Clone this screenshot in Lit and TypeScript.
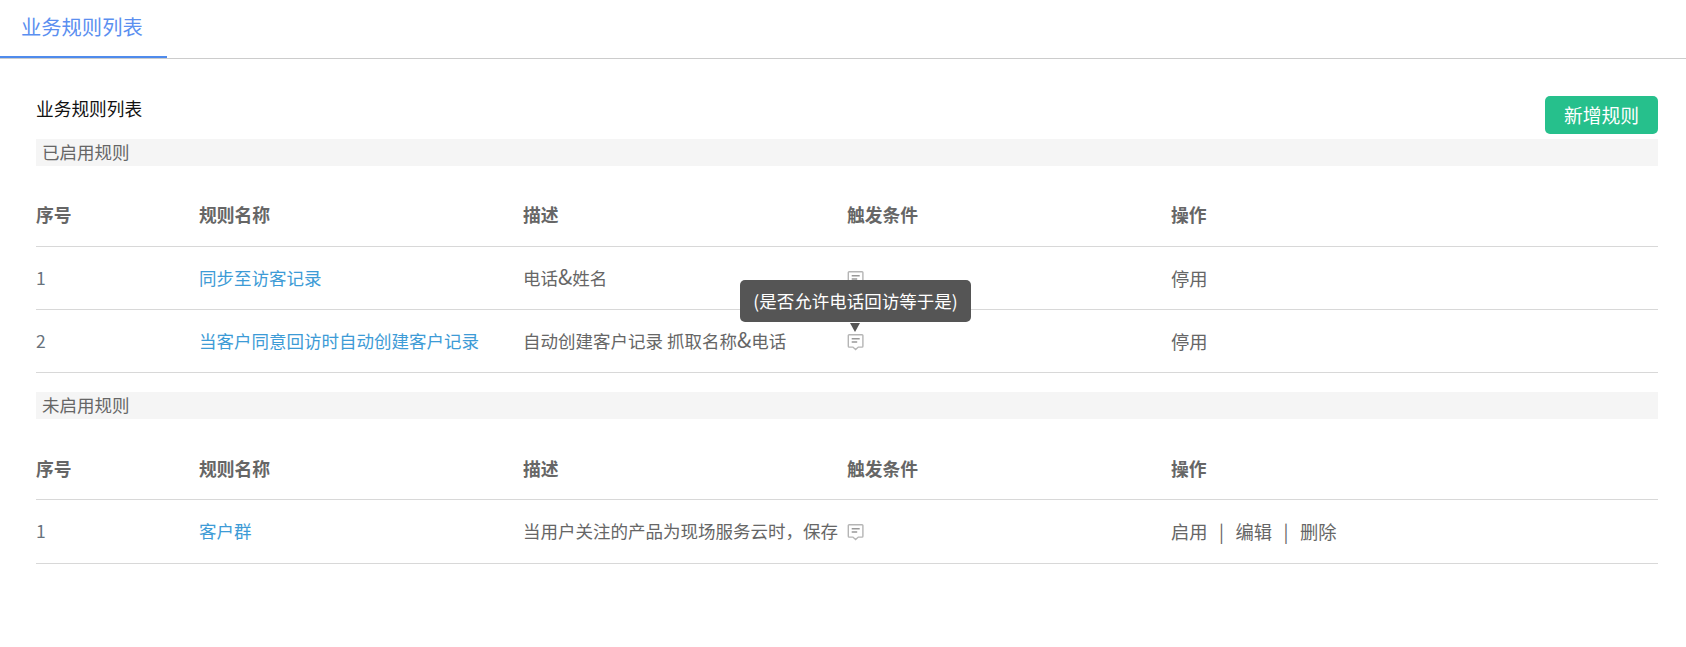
import { LitElement, html, css } from "lit";
import { customElement } from "lit/decorators.js";

const icon = html`<svg class="ic" width="18" height="18" viewBox="0 0 18 18" fill="none" stroke="#b5b5b5" stroke-width="1.4"><path d="M2.200 1.700h12.800a.9.9 0 0 1 .9.9v10.600a.9.9 0 0 1-.9.9h-3.700l-2.700 2.500-2.700-2.500H2.200a.9.9 0 0 1-.9-.9V2.600a.9.9 0 0 1 .9-.9z"/><path d="M4.700 5.700h8M4.700 9h5.500" stroke="#999"/></svg>`;

@customElement("app-root")
export class AppRoot extends LitElement {
  static styles = css`
    :host { display: block; width: 1686px; height: 647px; background: #fff; position: relative; overflow: hidden;
      font-family: "Noto Sans CJK SC", "Liberation Sans", sans-serif; color: #666; font-size: 17px; }
    .tabs { height: 59px; box-sizing: border-box; border-bottom: 1px solid #ccc; }
    .tab { width: 167px; height: 58px; box-sizing: border-box; border-bottom: 2px solid #4f8bec; color: #5b8ff0;
      font-size: 20.300px; line-height: 53px; padding-left: 21px; }
    .main { padding: 33px 28px 0 36px; }
    .head { display: flex; justify-content: space-between; height: 47px; }
    .title { color: #111; font-size: 17.700px; line-height: 28px; margin-top: 2px; }
    .btn { width: 113px; height: 38px; margin-top: 4px; background: #26c08c; color: #fff; border-radius: 5px;
      font-size: 18.800px; line-height: 38px; text-align: center; }
    .bar { height: 27px; line-height: 26px; background: #f5f5f5; padding-left: 6px; font-size: 17.500px; }
    table { width: 100%; border-collapse: collapse; table-layout: fixed; font-size: 17.500px; }
    th { text-align: left; font-weight: 700; font-size: 17.800px; height: 80px; padding: 16px 0 0; box-sizing: border-box; border-bottom: 1px solid #d8d8d8; color: #666; }
    .second th { height: 81px; padding-top: 18px; }
    td { height: 63px; padding: 0; box-sizing: border-box; border-bottom: 1px solid #d8d8d8; white-space: nowrap; overflow: hidden; }
    .last td { height: 64px; padding-bottom: 2px; }
    .num { width: 163px; } .c { width: 324px; }
    .link { color: #3d9bd6; }
    .idx { color: #68727c; }
    .ops { font-size: 18.300px; }
    .amp { font-size: 21px; line-height: 1; }
    .ic { vertical-align: -3px; display: inline-block; }
    .bar2 { margin-top: 19px; }
    .sep { padding: 0 11.500px; }
    .tip { position: absolute; left: 740px; top: 280px; width: 231px; height: 42px; background: #555; color: #fff;
      border-radius: 5px; font-size: 17.500px; line-height: 42px; text-align: center; white-space: nowrap; }
    .tip::after { content: ""; position: absolute; left: 110px; top: 43px; border: 5px solid transparent; border-top: 9px solid #555; border-bottom: 0; }
  `;
  private headRow() {
    return html`<tr><th class="num">序号</th><th class="c">规则名称</th><th class="c">描述</th><th class="c">触发条件</th><th>操作</th></tr>`;
  }
  render() {
    return html`
      <div class="tabs"><div class="tab">业务规则列表</div></div>
      <div class="main">
        <div class="head"><div class="title">业务规则列表</div><div class="btn">新增规则</div></div>
        <div class="bar">已启用规则</div>
        <table>
          ${this.headRow()}
          <tr><td class="idx">1</td><td class="link">同步至访客记录</td><td>电话<span class="amp">&amp;</span>姓名</td><td>${icon}</td><td class="ops">停用</td></tr>
          <tr><td class="idx">2</td><td class="link">当客户同意回访时自动创建客户记录</td><td>自动创建客户记录 抓取名称<span class="amp">&amp;</span>电话</td><td>${icon}</td><td class="ops">停用</td></tr>
        </table>
        <div class="bar bar2">未启用规则</div>
        <table class="second">
          ${this.headRow()}
          <tr class="last"><td class="idx">1</td><td class="link">客户群</td><td>当用户关注的产品为现场服务云时，保存</td><td>${icon}</td><td class="ops">启用<span class="sep">|</span>编辑<span class="sep">|</span>删除</td></tr>
        </table>
      </div>
      <div class="tip">(是否允许电话回访等于是)</div>
    `;
  }
}
